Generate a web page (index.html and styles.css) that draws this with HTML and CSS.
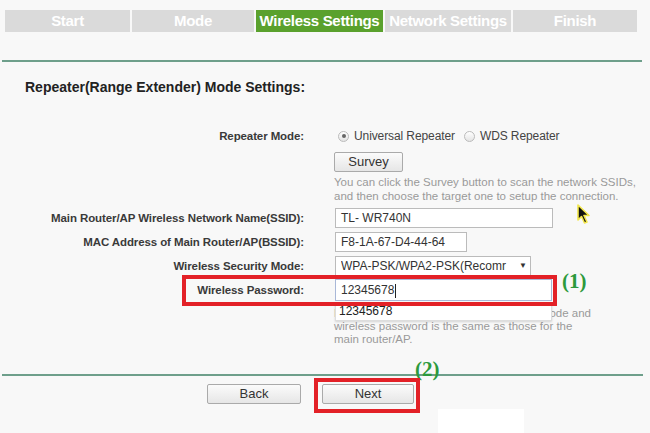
FILE: index.html
```html
<!DOCTYPE html>
<html>
<head>
<meta charset="utf-8">
<link rel="stylesheet" href="styles.css">
</head>
<body>
<div class="page">
  <div class="steps">
    <div class="step s1">Start</div>
    <div class="step s2">Mode</div>
    <div class="step s3 active">Wireless Settings</div>
    <div class="step s4">Network Settings</div>
    <div class="step s5">Finish</div>
  </div>
  <div class="rule top"></div>
  <h1 class="title">Repeater(Range Extender) Mode Settings:</h1>

  <div class="form">
    <div class="row r-mode">
      <div class="label">Repeater Mode:</div>
      <div class="ctrl radios">
        <span class="radio checked"></span><span class="rtext">Universal Repeater</span>
        <span class="radio"></span><span class="rtext">WDS Repeater</span>
      </div>
    </div>
    <div class="row r-survey">
      <div class="label"></div>
      <div class="ctrl"><div class="btn survey">Survey</div></div>
    </div>
    <div class="row r-help">
      <div class="label"></div>
      <div class="ctrl help">You can click the Survey button to scan the network SSIDs,<br>and then choose the target one to setup the connection.</div>
    </div>
    <div class="row r-field">
      <div class="label">Main Router/AP Wireless Network Name(SSID):</div>
      <div class="ctrl"><div class="field w-ssid">TL- WR740N</div></div>
    </div>
    <div class="row r-field">
      <div class="label">MAC Address of Main Router/AP(BSSID):</div>
      <div class="ctrl"><div class="field w-mac">F8-1A-67-D4-44-64</div></div>
    </div>
    <div class="row r-field">
      <div class="label">Wireless Security Mode:</div>
      <div class="ctrl"><div class="field select w-sel"><span class="seltext">WPA-PSK/WPA2-PSK(Recomr</span><span class="arrow">&#9660;</span></div></div>
    </div>
    <div class="row r-field r-pass">
      <div class="label">Wireless Password:</div>
      <div class="ctrl pass-wrap">
        <div class="field w-pass focus">12345678<span class="caret"></span></div>
        <div class="autocomplete">12345678</div>
      </div>
      <div class="redbox pass-box"></div>
      <div class="mark m1">(1)</div>
    </div>
    <div class="row r-help2">
      <div class="label"></div>
      <div class="ctrl help">Please ensure that the wireless security mode and<br>wireless password is the same as those for the<br>main router/AP.</div>
    </div>
  </div>

  <div class="bottom">
    <div class="mark m2">(2)</div>
    <div class="rule low"></div>
    <div class="buttons">
      <div class="btn back">Back</div>
      <div class="next-wrap">
        <div class="btn next">Next</div>
        <div class="redbox next-box"></div>
      </div>
    </div>
  </div>

  <div class="glare"></div>
  <svg class="cursor" width="16" height="22" viewBox="0 0 16 22">
    <path d="M2 1 L2 16 L5.5 12.5 L8.5 19 L11 18 L8 11.5 L13 11.5 Z" fill="#111" stroke="#f2e64a" stroke-width="1.6" stroke-linejoin="round"/>
  </svg>
</div>
</body>
</html>
```

FILE: styles.css
```css
* { box-sizing: border-box; }
html, body { margin: 0; padding: 0; }
body {
  background: #f8f8f8;
  font-family: "Liberation Sans", Arial, sans-serif;
  color: #333;
  width: 650px;
  height: 433px;
  overflow: hidden;
}
.page { position: relative; width: 650px; height: 433px; }

.steps {
  display: flex;
  gap: 2px;
  padding: 10px 0 0 5px;
}
.step {
  height: 22px;
  line-height: 22px;
  background: #dadada;
  color: #fff;
  font-weight: bold;
  font-size: 15px;
  text-align: center;
  white-space: nowrap;
  overflow: hidden;
  letter-spacing: -0.3px;
}
.s1 { width: 125px; }
.s2 { width: 122px; }
.s3 { width: 127px; }
.s4 { width: 126px; }
.s5 { width: 124px; }
.step.active { background: #5aa12d; }

.rule { height: 2px; background: #6e9f8b; margin-left: 2px; width: 640px; }
.rule.top { margin-top: 28px; }

.title {
  margin: 17px 0 0 25px;
  font-size: 14px;
  line-height: 16px;
  font-weight: bold;
  color: #222;
}

.form { margin-top: 32px; }
.row { display: flex; align-items: center; position: relative; }
.label {
  width: 304px;
  flex: none;
  text-align: right;
  font-size: 11.5px;
  font-weight: bold;
  color: #3a3a3a;
  letter-spacing: -0.1px;
}
.ctrl { margin-left: 31px; }

.r-mode { height: 18px; }
.radios { display: flex; align-items: center; font-size: 12px; color: #444; }
.radio {
  width: 11px; height: 11px; border-radius: 50%;
  border: 1px solid #bbb;
  background: linear-gradient(#fff, #e4e4e4);
  margin: 0 5px 0 3px;
  position: relative;
}
.radio.checked::after {
  content: ""; position: absolute; left: 2.5px; top: 2.5px;
  width: 4px; height: 4px; border-radius: 50%; background: #666;
}
.rtext { margin-right: 6px; letter-spacing: -0.1px; }

.r-survey { margin-top: 7px; }
.btn {
  height: 20px;
  line-height: 18px;
  text-align: center;
  font-size: 13px;
  color: #333;
  border: 1px solid #aaa;
  border-radius: 2px;
  background: linear-gradient(#fbfbfb, #e6e6e6);
}
.survey { width: 69px; margin-left: -1px; }

.r-help { margin-top: 3px; }
.help {
  font-size: 11.5px;
  line-height: 14px;
  color: #9a9a9a;
  margin-left: 30px;
}

.r-field { margin-top: 4px; height: 20px; }
.r-help + .r-field { margin-top: 5px; }
.field {
  height: 20px;
  line-height: 18px;
  border: 1px solid #bbb;
  background: #fff;
  font-size: 12px;
  color: #333;
  padding: 0 5px;
  white-space: nowrap;
  overflow: hidden;
}
.w-ssid { width: 218px; }
.w-mac { width: 132px; }
.w-sel { width: 196px; display: flex; padding-right: 3px; }
.seltext { flex: 1; overflow: hidden; }
.arrow { font-size: 8px; color: #333; padding-left: 4px; }
.r-pass { height: 22px; margin-top: 3px; }
.w-pass { width: 217px; height: 22px; line-height: 20px; border-color: #a9b8d8; }
.caret { display: inline-block; width: 1px; height: 14px; background: #222; vertical-align: middle; margin-left: 1px; }
.pass-wrap { position: relative; }
.autocomplete {
  position: absolute;
  left: 0; top: 24px;
  width: 217px; height: 18px;
  background: #fff;
  border: 1px solid #ddd;
  border-top: none;
  font-size: 12px;
  line-height: 17px;
  padding-left: 3px;
  color: #222;
  box-shadow: 0 1px 2px rgba(0,0,0,0.15);
  z-index: 2;
}
.redbox { position: absolute; border: 4px solid #e32127; }
.pass-box { left: 182px; top: -4px; width: 375px; height: 31px; z-index: 3; }
.mark {
  position: absolute;
  font-family: "Liberation Serif", "Times New Roman", serif;
  font-weight: bold;
  font-size: 21px;
  color: #2d9a3c;
}
.m1 { left: 562px; top: -10px; }

.r-help2 { margin-top: 6px; }
.r-help2 .help { line-height: 13px; }

.bottom { position: relative; margin-top: 28px; }
.rule.low { width: 641px; }
.m2 { left: 415px; top: -17px; }
.buttons { display: flex; padding: 8px 0 0 207px; gap: 21px; }
.back { width: 94px; }
.next-wrap { position: relative; }
.next { width: 92px; }
.next-box { left: -8px; top: -6px; width: 106px; height: 35px; }

.glare {
  position: absolute;
  left: 438px; top: 409px;
  width: 86px; height: 24px;
  background: #fff;
}
.cursor { position: absolute; left: 576px; top: 204px; }
```
